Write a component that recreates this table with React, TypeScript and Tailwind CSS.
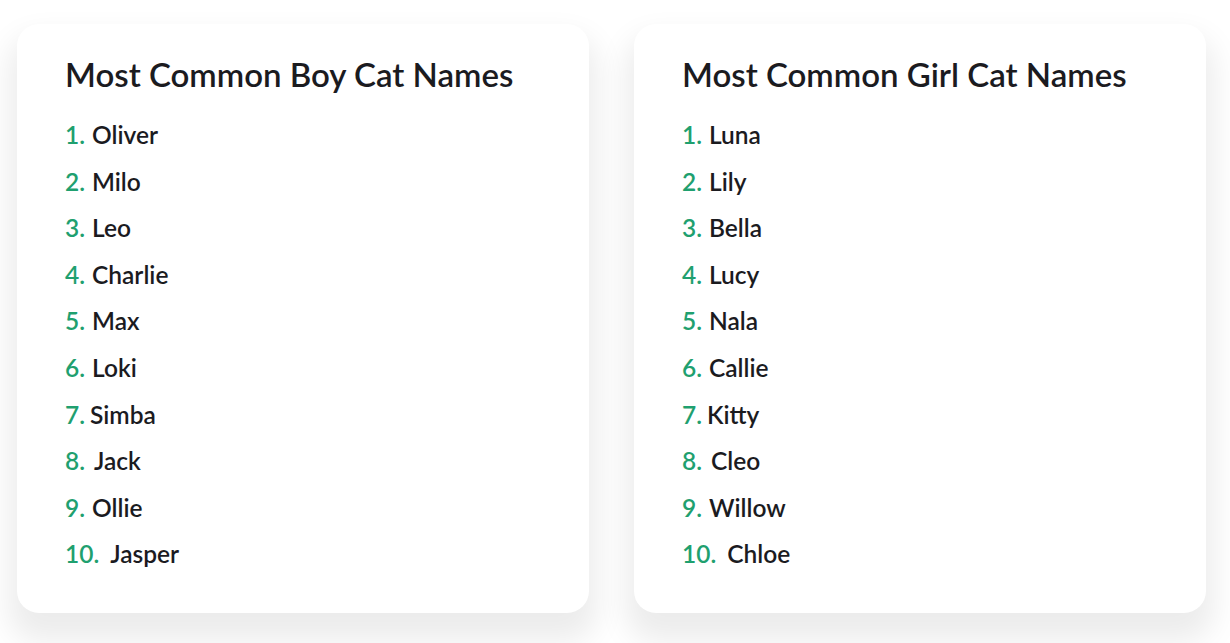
const boys = ["Oliver", "Milo", "Leo", "Charlie", "Max", "Loki", "Simba", "Jack", "Ollie", "Jasper"];
const girls = ["Luna", "Lily", "Bella", "Lucy", "Nala", "Callie", "Kitty", "Cleo", "Willow", "Chloe"];

// spacing quirks between number and name, as in the source
const gaps = ["ml-[7px]", "ml-[7px]", "ml-[7px]", "ml-[7px]", "ml-[7px]", "ml-[7px]", "ml-[5px]", "ml-[9px]", "ml-[7px]", "ml-[11px]"];

function NameCard({ title, names }: { title: string; names: string[] }) {
  return (
    <div className="h-[589px] w-[572px] shrink-0 rounded-[22px] bg-white pl-[48px] pt-[30px] shadow-[0_20px_30px_8px_rgba(0,0,0,0.08)]">
      <h2 className="text-[33px] font-semibold leading-[40px] text-[#1b1b1f]">{title}</h2>
      <ol className="mt-[18px]">
        {names.map((name, i) => (
          <li key={name} className="text-[24.5px] font-semibold leading-[46.6px] text-[#1b1b1f]">
            <span className="text-[#1fa06f]">{i + 1}.</span>
            <span className={gaps[i]}>{name}</span>
          </li>
        ))}
      </ol>
    </div>
  );
}

export default function App() {
  return (
    <div
      className="flex h-[643px] w-[1230px] gap-[45px] bg-white pl-[17px] pt-[24px]"
      style={{ fontFamily: "Lato, 'Noto Sans', sans-serif" }}
    >
      <NameCard title="Most Common Boy Cat Names" names={boys} />
      <NameCard title="Most Common Girl Cat Names" names={girls} />
    </div>
  );
}
